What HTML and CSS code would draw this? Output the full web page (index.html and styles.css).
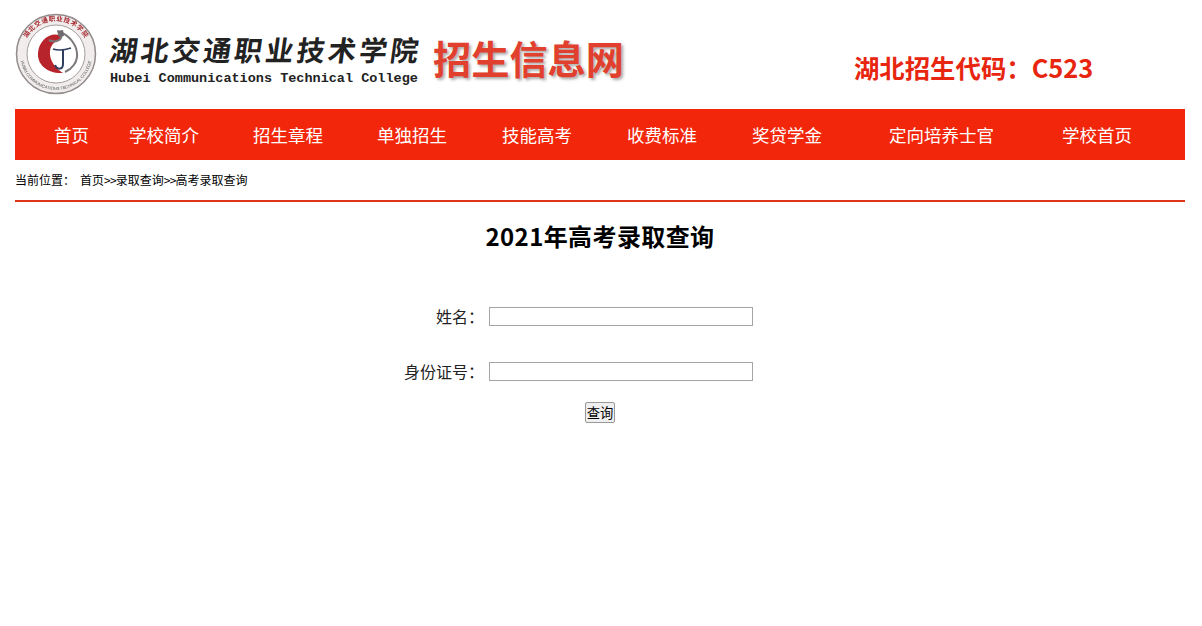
FILE: index.html
```html
<!DOCTYPE html>
<html lang="zh-CN">
<head>
    <meta charset="UTF-8">
    <title>高考录取查询</title>
    <link rel="stylesheet" href="styles.css">
</head>
<body>
    <div class="wrap">
        <header class="top">
            <svg class="logo" width="82" height="82" viewBox="0 0 82 82">
                <defs>
                    <path id="arcTop" d="M 8 41 A 33 33 0 0 1 74 41"/>
                    <path id="arcBottom" d="M 5 41 A 36 36 0 0 0 77 41"/>
                </defs>
                <circle cx="41" cy="41" r="39.5" fill="#f1eded" stroke="#948b8b" stroke-width="1.5"/>
                <circle cx="41" cy="41" r="29" fill="#fff" stroke="#a59c9c" stroke-width="1"/>
                <text class="logo-cn"><textPath href="#arcTop" startOffset="50%" text-anchor="middle">湖北交通职业技术学院</textPath></text>
                <text class="logo-en"><textPath href="#arcBottom" startOffset="50%" text-anchor="middle">HUBEI COMMUNICATIONS TECHNICAL COLLEGE</textPath></text>
                <path d="M 46 23 C 36 18 24 27 23 40 C 22 52 33 61 48 60 C 40 55 34 47 35 38 C 36 31 40 28 46 27 Z" fill="#b8242c"/>
                <path d="M 34 27 C 42 31 50 25 45 19 C 53 22 61 30 62 40 C 63 49 57 56 50 59" fill="none" stroke="#7d787c" stroke-width="2"/>
                <path d="M 42 18 L 48 17 L 49 23 L 44 24 Z" fill="#6f6a70"/>
                <path d="M 38 36 C 44 38 50 37 56 35" fill="none" stroke="#2f3d5e" stroke-width="1.5"/>
                <path d="M 48 36 L 48 51 C 48 57 42 57 40 52" fill="none" stroke="#2f3d5e" stroke-width="2"/>
            </svg>
            <div class="school">
                <div class="school-cn">湖北交通职业技术学院</div>
                <div class="school-en">Hubei Communications Technical College</div>
            </div>
            <div class="site-name">招生信息网</div>
            <div class="code">湖北招生代码：C523</div>
        </header>

        <nav class="nav">
            <a href="#">首页</a>
            <a href="#">学校简介</a>
            <a href="#">招生章程</a>
            <a href="#">单独招生</a>
            <a href="#">技能高考</a>
            <a href="#">收费标准</a>
            <a href="#">奖贷学金</a>
            <a href="#">定向培养士官</a>
            <a href="#">学校首页</a>
        </nav>

        <div class="crumb">
            <span class="crumb-label">当前位置：</span><a href="#">首页</a><span class="sep">&gt;&gt;</span><a href="#">录取查询</a><span class="sep">&gt;&gt;</span><a href="#">高考录取查询</a>
        </div>

        <h1 class="title">2021年高考录取查询</h1>

        <form class="query">
            <div class="field">
                <label for="name">姓名：</label>
                <input type="text" id="name">
            </div>
            <div class="field">
                <label for="idcard">身份证号：</label>
                <input type="text" id="idcard">
            </div>
            <button type="button" class="submit">查询</button>
        </form>
    </div>
</body>
</html>
```

FILE: styles.css
```css
body {
  margin: 0;
  background-color: #fff;
  color: #000;
  font-family: "Noto Sans CJK SC", "Liberation Sans", sans-serif;
}

a {
  color: inherit;
  text-decoration: none;
}

.wrap {
  width: 1170px;
  margin-left: 15px;
}

/* header */
.top {
  height: 109px;
  display: flex;
  align-items: flex-start;
}

.logo {
  margin-top: 13px;
  flex: none;
  filter: blur(0.3px);
}

.logo-cn {
  font-size: 6.5px;
  font-weight: 700;
  fill: #a5262c;
  letter-spacing: 0.6px;
}

.logo-en {
  font-family: "Liberation Sans", sans-serif;
  font-size: 4.2px;
  fill: #555;
}

.school {
  margin: 29px 0 0 13px;
  width: 323px;
  flex: none;
}

.school-cn {
  font-size: 28px;
  line-height: 40px;
  font-weight: 700;
  letter-spacing: 3.2px;
  color: #222;
  transform: skewX(-8deg);
  white-space: nowrap;
}

.school-en {
  font-family: "Liberation Mono", monospace;
  font-size: 13.5px;
  font-weight: 700;
  line-height: 16px;
  margin-top: 2px;
  color: #222;
  white-space: nowrap;
}

.site-name {
  font-size: 38.2px;
  line-height: 44px;
  font-weight: 700;
  color: #e1402e;
  text-shadow: 2px 2px 3px #aaa;
  margin-top: 36px;
  flex: none;
}

.code {
  font-size: 25.4px;
  line-height: 32px;
  font-weight: 700;
  color: #e8260f;
  margin: 51px 0 0 230px;
  white-space: nowrap;
}

/* nav */
.nav {
  height: 51px;
  background-color: #f2260a;
  display: grid;
  grid-template-columns: 75px 124px 124px 125px 125px 125px 137px 173px auto;
  padding-left: 39px;
  align-items: center;
  color: #fff;
  font-size: 17.5px;
}

.nav a {
  white-space: nowrap;
}

/* breadcrumb */
.crumb {
  height: 40px;
  line-height: 40px;
  font-size: 12px;
  border-bottom: 2px solid #e0331c;
}

.crumb-label {
  margin-right: 5px;
}

.sep {
  letter-spacing: -0.8px;
}

.title {
  margin: 18px 0 0;
  text-align: center;
  font-size: 24px;
  letter-spacing: 0.4px;
  line-height: 32px;
  font-weight: 700;
}

/* form */
.query {
  margin-top: 55px;
  display: flex;
  flex-direction: column;
  align-items: center;
}

.field {
  width: 100%;
  height: 55px;
  display: flex;
  align-items: flex-start;
}

.field label {
  width: 469px;
  margin-right: 5px;
  flex: none;
  text-align: right;
  font-size: 16px;
  line-height: 18px;
  color: #222;
}

.field input {
  box-sizing: border-box;
  width: 264px;
  height: 19px;
  padding: 0 2px;
  border: 1px solid #a5a5a5;
  border-radius: 0;
  background: #fff;
}

.submit {
  box-sizing: border-box;
  width: 30px;
  height: 21px;
  padding: 0;
  margin-top: -15px;
  font-family: inherit;
  font-size: 13.3px;
  line-height: 17px;
  color: #000;
  background-color: #efefef;
  border: 1px solid #999;
  border-radius: 2px;
}
```
